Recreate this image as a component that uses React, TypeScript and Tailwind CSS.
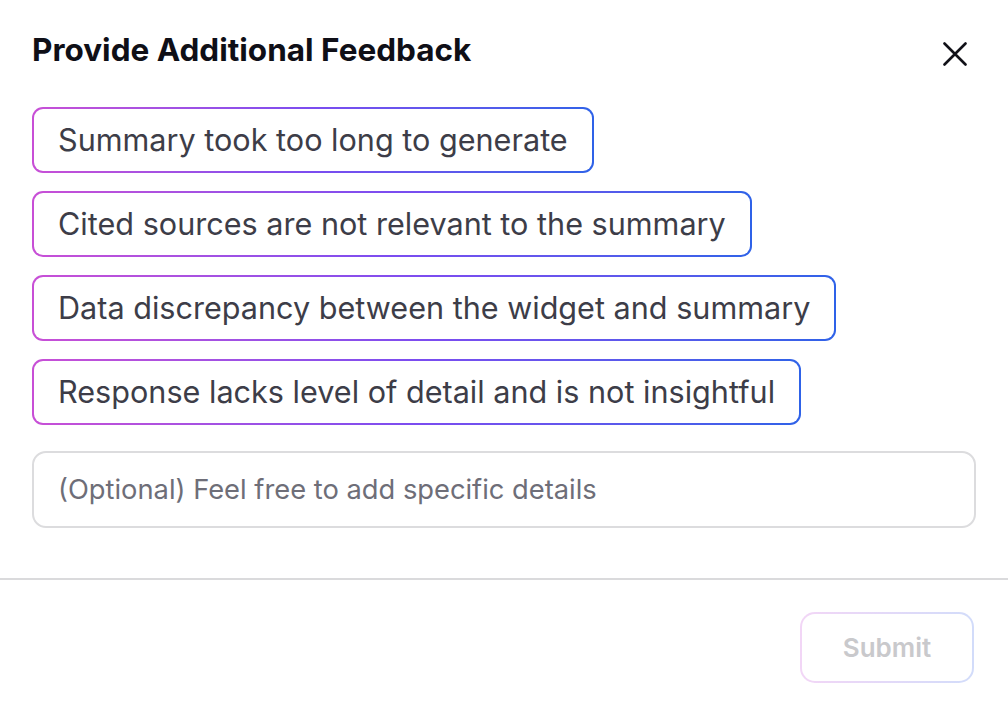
const reasons = [
  'Summary took too long to generate',
  'Cited sources are not relevant to the summary',
  'Data discrepancy between the widget and summary',
  'Response lacks level of detail and is not insightful',
];

function Chip({ label }: { label: string }) {
  return (
    <div className="w-fit rounded-[11px] bg-gradient-to-r from-[#c84fd6] via-[#7b4cf0] to-[#2e62e8] p-[2px]">
      <button className="h-[62px] rounded-[9px] bg-white px-[24px] text-[30.6px] leading-none text-[#3d3d48]">
        {label}
      </button>
    </div>
  );
}

export default function App() {
  return (
    <div className="h-[706px] w-[1008px] bg-white font-['Inter',sans-serif]">
      <div className="px-[32px] pt-[30px]">
        <div className="flex flex-row items-start justify-between">
          <h2 className="text-[31.5px] font-bold leading-[40px] text-[#0f0f17]">Provide Additional Feedback</h2>
          <button className="mr-[9px] mt-[12px] text-[#111118]">
            <svg width="24" height="24" viewBox="0 0 24 24" fill="none" stroke="currentColor" strokeWidth="2.6" strokeLinecap="round">
              <path d="M1.5 1.5L22.5 22.5M22.5 1.5L1.5 22.5" />
            </svg>
          </button>
        </div>

        <div className="mt-[37px] flex flex-col gap-[18px]">
          {reasons.map((r) => (
            <Chip key={r} label={r} />
          ))}
        </div>

        <input
          className="mt-[26px] h-[77px] w-full rounded-[14px] border-2 border-[#dcdcde] px-[24px] text-[27.3px] text-[#3d3d48] outline-none placeholder:text-[#6e6e78]"
          placeholder="(Optional) Feel free to add specific details"
        />
      </div>

      <div className="mt-[50px] h-[2px] w-full bg-[#dadadc]" />

      <div className="flex flex-row justify-end px-[34px] pt-[32px]">
        <div className="rounded-[15px] bg-gradient-to-r from-[#f2d6f6] to-[#d2dcfa] p-[2px]">
          <button className="h-[67px] w-[170px] rounded-[13px] bg-white text-[26px] font-semibold text-[#c9c9cc]">
            Submit
          </button>
        </div>
      </div>
    </div>
  );
}
